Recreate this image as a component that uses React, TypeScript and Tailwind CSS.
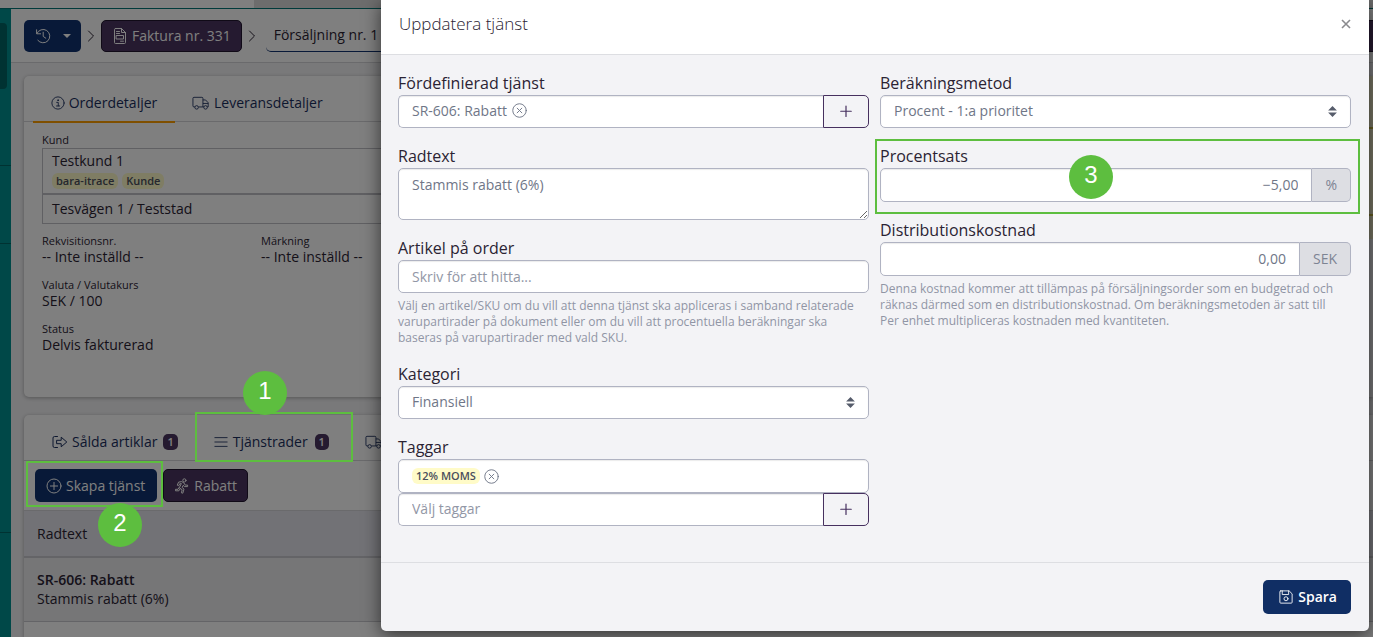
import React, { useState } from "react";
import type { ReactNode } from "react";

// Thin line icons, all on a 16x16 grid
const icons: Record<string, ReactNode> = {
  history: (
    <>
      <path d="M1.6 1.8v4h4" />
      <path d="M1.9 5.5A6.7 6.7 0 1 1 2.8 12.3" />
      <path d="M8.2 4.2v4.2l2.6 1.8" />
    </>
  ),
  invoice: (
    <>
      <path d="M3.5.5h6l4 4v10q0 1-1 1h-9q-1 0-1-1v-13q0-1 1-1z" />
      <path d="M9.5.5v4h4M4.5 3.5h3M4.5 5.5h3M4.5 7.5h7v3.5h-7zM8.5 13.2h3" />
    </>
  ),
  info: (
    <>
      <circle cx="8" cy="8" r="7" />
      <path d="M6.5 7.3H8.3v4M6.3 11.4h3.6" />
      <circle cx="8" cy="4.8" r=".5" fill="currentColor" />
    </>
  ),
  signOut: (
    <>
      <path d="M5.5 2.5h-3q-1.5 0-1.5 1.5v8q0 1.5 1.5 1.5h3" />
      <path d="M5 6.3h4.2V3.2L14.8 8l-5.6 4.8V9.7H5z" />
    </>
  ),
  bars: <path d="M1 3h14M1 8h14M1 13h14" />,
  plusCircle: (
    <>
      <circle cx="8" cy="8" r="7" />
      <path d="M8 4.4v7.2M4.4 8h7.2" />
    </>
  ),
  timesCircle: (
    <>
      <circle cx="8" cy="8" r="7.2" />
      <path d="M5.5 5.5l5 5M10.5 5.5l-5 5" />
    </>
  ),
  running: (
    <>
      <circle cx="10.4" cy="2.4" r="1.6" />
      <path d="M3.4 6.8l1.2-2.7 3.1-.5 2.4 1.5 1.1 2h2.4v1.5h-3.3l-.9-1.4-1.4 2.2 2 1.7-1.2 4.1-1.4-.4.8-3-2.9-2 2.1-4.2-1.7.2-.8 1.6z" />
      <path d="M4.9 9.7L4 11.3H1.5v1.5h3.4l1.2-2" />
    </>
  ),
  save: (
    <>
      <path d="M2 1h9.6L15 4.4V14q0 1-1 1H2q-1 0-1-1V2q0-1 1-1z" />
      <path d="M3.7 1v4.2h7.3V1" />
      <circle cx="8" cy="10" r="2.3" />
    </>
  ),
  plus: <path d="M8 3v10.5M2.75 8.25h10.5" strokeWidth="1.2" />,
  chevron: <path d="M5.5 3l5 5-5 5" />,
};

const Icon = ({ name, className = "size-4" }: { name: string; className?: string }) => (
  <svg
    viewBox="0 0 16 16"
    fill="none"
    stroke="currentColor"
    strokeLinejoin="round"
    strokeLinecap="round"
    className={`shrink-0 ${className}`}
    aria-hidden="true"
  >
    {icons[name]}
  </svg>
);

const Truck = () => (
  <svg
    viewBox="0 0 20 16"
    fill="none"
    stroke="currentColor"
    strokeLinejoin="round"
    className="h-[14px] w-[18px] shrink-0"
    aria-hidden="true"
  >
    <path d="M3 12.5H2q-1.2 0-1.2-1.2V2.7q0-1.2 1.2-1.2h9q1.2 0 1.2 1.2v9.8H7.2" />
    <path d="M12.2 4.5h3l3 3.2v4.8h-1M18.2 8.5h-6M13.2 12.5h-1" />
    <circle cx="5" cy="13" r="2" />
    <circle cx="15.2" cy="13" r="2" />
  </svg>
);

const Tag = ({ children }: { children: ReactNode }) => (
  <span className="rounded-md bg-[#fffbc8] px-1 text-[11px] leading-4 font-semibold text-[#4b4f5c]">
    {children}
  </span>
);

const Count = ({ children }: { children: ReactNode }) => (
  <span className="ml-0.5 rounded-[5px] bg-[#4a3560] px-1 text-[11px] leading-4 font-semibold text-white">
    {children}
  </span>
);

const Info = ({ label, value }: { label: string; value: string }) => (
  <div className="h-11">
    <dt className="text-[11px] leading-4">{label}</dt>
    <dd className="text-sm leading-4">{value}</dd>
  </div>
);

// Form parts used in the dialog
const labelClass = "block text-base leading-6 text-[#2b2333]";
const boxClass =
  "w-full min-w-0 border border-[#b0b3c2] bg-white px-[13px] text-sm text-[#6f7687] shadow-[inset_0_1px_1px_rgba(0,0,0,0.08)] placeholder-[#9297a6] focus:outline-none";

const Select = ({ id, label, options }: { id: string; label: string; options: string[] }) => (
  <div>
    <label htmlFor={id} className={labelClass}>
      {label}
    </label>
    <div className="relative">
      <select id={id} className={`${boxClass} h-[33px] appearance-none rounded-[5px] pb-0.5`}>
        {options.map((o) => (
          <option key={o}>{o}</option>
        ))}
      </select>
      <svg
        viewBox="0 0 8 10"
        className="pointer-events-none absolute top-[11px] right-[14px] h-[11px] w-[9px] fill-[#565c6b]"
        aria-hidden="true"
      >
        <path d="M4 0L0 4h8zM4 10L0 6h8z" />
      </svg>
    </div>
  </div>
);

const AddButton = ({ label }: { label: string }) => (
  <button
    type="button"
    aria-label={label}
    className="flex w-[46px] shrink-0 items-center justify-center rounded-r-[5px] border border-[#46305f] pb-0.5 text-[#46305f]"
  >
    <Icon name="plus" />
  </button>
);

const Amount = ({
  id,
  label,
  unit,
  initial,
}: {
  id: string;
  label: string;
  unit: string;
  initial: string;
}) => {
  const [value, setValue] = useState(initial);
  return (
    <div>
      <label htmlFor={id} className={labelClass}>
        {label}
      </label>
      <div className="flex h-[34px]">
        <input
          id={id}
          type="text"
          value={value}
          onChange={(e) => setValue(e.target.value)}
          className={`${boxClass} rounded-l-[5px] text-right`}
        />
        <span className="flex items-center rounded-r-[5px] border border-l-0 border-[#b0b3c2] bg-[#dddee3] px-[13px] text-sm text-[#7d8493]">
          {unit}
        </span>
      </div>
    </div>
  );
};

const Help = ({ children }: { children: ReactNode }) => (
  <p className="mt-[5px] pr-2 text-xs leading-4 text-[#9095a5]">{children}</p>
);

// Order page behind the dialog
const OrderPage = () => (
  <div className="flex min-h-screen flex-col text-[#2b2333]">
    <div className="flex h-[9px] border-b border-[#007474] bg-[#dadada]">
      <div className="w-[254px] bg-white" />
    </div>
    <div className="flex flex-1">
      <nav className="flex w-[11px] shrink-0 flex-col bg-[#009090]">
        <div className="h-[157px] border-b border-[#006464] pt-[14px]">
          <div className="h-[66px] w-[7px] rounded-r bg-[#006464]" />
        </div>
        <div className="h-[78px] border-b border-[#006464]" />
        <div className="h-[289px] border-b border-[#006464]" />
      </nav>
      <main className="min-w-0 flex-1 bg-[#f3f3f5]">
        <div className="flex h-[54px] items-center border-b border-[#d4d4d8] bg-white pl-[13px]">
          <button
            type="button"
            aria-label="Historik"
            className="flex h-8 w-[57px] items-center gap-3 rounded-[5px] bg-[#113370] pl-[11px] text-white"
          >
            <Icon name="history" />
            <svg viewBox="0 0 8 4" className="h-1 w-2 fill-current" aria-hidden="true">
              <path d="M0 0h8L4 4z" />
            </svg>
          </button>
          <Icon name="chevron" className="mx-0.5 size-4" />
          <button
            type="button"
            className="flex h-8 items-center gap-1 rounded-[5px] border border-[#20152e] bg-[#4a3560] px-[10px] text-sm text-white"
          >
            <Icon name="invoice" />
            Faktura nr. 331
          </button>
          <Icon name="chevron" className="mx-0.5 size-4" />
          <button
            type="button"
            className="ml-1 h-8 shrink-0 rounded-[5px] border-b border-[#113370] px-2 text-sm"
          >
            Försäljning nr. 1
          </button>
          <button
            type="button"
            aria-label="Fler val"
            className="ml-auto h-8 w-5 rounded-l-[5px] border border-r-0 border-[#20152e] bg-[#4a3560]"
          />
        </div>

        <div className="pt-[13px] pl-[13px]">
          <section className="flex rounded-l-[5px] bg-white shadow-[0_1px_4px_rgba(0,0,0,0.3)]">
            <div className="h-[321px] flex-1">
              <div className="flex h-[46px] border-b border-[#d4d4d8] pl-[9px] text-sm text-[#1b2f5e]">
                <a href="#order" className="flex h-[47px] w-[142px] items-center justify-center gap-1 border-b-2 border-[#ff9f00] pt-2">
                  <Icon name="info" className="size-[14px]" /> Orderdetaljer
                </a>
                <a href="#leverans" className="flex h-[47px] items-center gap-1 px-[17px] pt-[6px]">
                  <Truck /> Leveransdetaljer
                </a>
              </div>
              <div className="pt-[10px] pl-[18px]">
                <h2 className="text-[11px] leading-4">Kund</h2>
                <div className="border border-r-0 border-[#c0c0c6] text-sm">
                  <div className="h-[46px] border-b-2 border-[#c0c0c6] pt-0.5 pl-[9px]">
                    <p className="leading-5">Testkund 1</p>
                    <div className="mt-0.5 flex gap-1">
                      <Tag>bara-itrace</Tag>
                      <Tag>Kunde</Tag>
                    </div>
                  </div>
                  <p className="pl-[9px] leading-7">Tesvägen 1 / Teststad</p>
                </div>
                <dl className="grid grid-cols-[219px_1fr] pt-[9px]">
                  <Info label="Rekvisitionsnr." value="-- Inte inställd --" />
                  <Info label="Märkning" value="-- Inte inställd --" />
                  <div className="col-span-2">
                    <Info label="Valuta / Valutakurs" value="SEK / 100" />
                    <Info label="Status" value="Delvis fakturerad" />
                  </div>
                </dl>
              </div>
            </div>
            <aside className="w-[300px] bg-[#f3f3f5]">
              <div className="h-[53px] border-b-2 border-[#c8b840] bg-[#f0ecc8]" />
              <div className="h-[87px] border-b-2 border-[#c8b840] bg-[#f0ecc8]" />
              <div className="h-[23px] bg-[#f0ecc8]" />
            </aside>
          </section>

          <section className="mt-[18px] rounded-tl-[5px] bg-white shadow-[0_1px_4px_rgba(0,0,0,0.3)]">
            <div className="flex h-[46px] items-center gap-9 border-b border-[#d4d4d8] pt-2 pl-7 text-sm text-[#1b2f5e]">
              <a href="#artiklar" className="flex items-center gap-1">
                <Icon name="signOut" /> Sålda artiklar <Count>1</Count>
              </a>
              <a href="#tjanster" className="flex items-center gap-[5px]">
                <Icon name="bars" className="size-[14px]" /> Tjänstrader <Count>1</Count>
              </a>
              <a href="#leveranser" aria-label="Leveranser">
                <Truck />
              </a>
            </div>
            <div className="flex h-[50px] items-center gap-[6px] border-b border-[#d4d4d8] pl-[11px] text-sm text-white">
              <button type="button" className="flex h-[33px] items-center gap-1 rounded-[5px] bg-[#113370] pr-3 pl-[11px]">
                <Icon name="plusCircle" /> Skapa tjänst
              </button>
              <button type="button" className="flex h-[33px] items-center gap-1 rounded-[5px] border border-[#20152e] bg-[#4a3560] px-[10px]">
                <Icon name="running" /> Rabatt
              </button>
            </div>
            <table className="w-full text-left text-sm">
              <thead>
                <tr className="h-[46px] border-b-2 border-[#c8c8ce] bg-[#e4e5ec]">
                  <th className="pl-[13px] font-normal">Radtext</th>
                </tr>
              </thead>
              <tbody>
                <tr className="h-[64px] border-b border-[#c8c8ce] bg-[#ececef]">
                  <td className="pl-[13px] leading-[19px]">
                    <strong className="block font-semibold">SR-606: Rabatt</strong>
                    Stammis rabatt (6%)
                  </td>
                </tr>
              </tbody>
            </table>
            <div className="h-4" />
          </section>
        </div>
      </main>
    </div>
  </div>
);

// Numbered green marker of the guide
const Step = ({ className, children }: { className: string; children: ReactNode }) => (
  <span
    className={`pointer-events-none absolute flex size-11 items-center justify-center rounded-full bg-[#5dbe3f] pb-1 font-['Liberation_Sans',sans-serif] text-2xl text-white ${className}`}
  >
    {children}
  </span>
);

const ServiceDialog = () => {
  const [text, setText] = useState("Stammis rabatt (6%)");

  return (
    <form
      role="dialog"
      aria-labelledby="dialog-title"
      onSubmit={(e) => e.preventDefault()}
      className="absolute top-0 right-1 left-[381px] rounded-b-[5px] bg-[#f3f3f6] shadow-[0_4px_18px_rgba(0,0,0,0.6)]"
    >
      <header className="flex h-[55px] items-center justify-between border-b border-[#dddee2] bg-white px-[18px] pb-[6px]">
        <h1 id="dialog-title" className="text-[17px] font-light text-[#2b2333]">
          Uppdatera tjänst
        </h1>
        <button type="button" aria-label="Stäng" className="text-[#8a8a8e]">
          <svg viewBox="0 0 10 10" className="size-[10px]" stroke="currentColor" strokeWidth="1.6" aria-hidden="true">
            <path d="M1 1l8 8M9 1l-8 8" />
          </svg>
        </button>
      </header>

      <div className="grid grid-cols-2 gap-[11px] pt-4 pr-[18px] pb-9 pl-[17px]">
        <div className="flex flex-col gap-4">
          <div>
            <h2 className={labelClass}>Fördefinierad tjänst</h2>
            <div className="flex h-[33px]">
              <div className={`${boxClass} flex items-center gap-[5px] rounded-l-[5px] border-r-0 pb-0.5`}>
                SR-606: Rabatt
                <button type="button" aria-label="Ta bort tjänst">
                  <Icon name="timesCircle" className="size-[15px]" />
                </button>
              </div>
              <AddButton label="Lägg till tjänst" />
            </div>
          </div>
          <div>
            <label htmlFor="radtext" className={labelClass}>
              Radtext
            </label>
            <textarea
              id="radtext"
              value={text}
              onChange={(e) => setText(e.target.value)}
              className={`${boxClass} block h-[52px] rounded-[5px] pt-[6px]`}
            />
          </div>
          <div>
            <label htmlFor="artikel" className={labelClass}>
              Artikel på order
            </label>
            <input
              id="artikel"
              type="text"
              placeholder="Skriv för att hitta..."
              className={`${boxClass} block h-[33px] rounded-[5px]`}
            />
            <Help>
              Välj en artikel/SKU om du vill att denna tjänst ska appliceras i samband relaterade
              varupartirader på dokument eller om du vill att procentuella beräkningar ska baseras
              på varupartirader med vald SKU.
            </Help>
          </div>
          <Select id="kategori" label="Kategori" options={["Finansiell"]} />
          <div>
            <label htmlFor="taggar" className={labelClass}>
              Taggar
            </label>
            <div className={`${boxClass} flex h-[34px] items-center gap-1 rounded-[5px]`}>
              <Tag>12% MOMS</Tag>
              <button type="button" aria-label="Ta bort tagg">
                <Icon name="timesCircle" className="size-[15px]" />
              </button>
            </div>
            <div className="flex h-[33px]">
              <input
                id="taggar"
                type="text"
                placeholder="Välj taggar"
                className={`${boxClass} rounded-l-[5px] border-r-0 pb-0.5`}
              />
              <AddButton label="Lägg till tagg" />
            </div>
          </div>
        </div>

        <div className="flex flex-col gap-4">
          <Select id="metod" label="Beräkningsmetod" options={["Procent - 1:a prioritet"]} />
          <div className="relative">
            <Amount id="procent" label="Procentsats" unit="%" initial="−5,00" />
            <div className="pointer-events-none absolute -top-[5px] -right-[9px] -left-[5px] h-[75px] border-2 border-[#5dbe3f]" />
            <Step className="top-[11px] left-[189px]">3</Step>
          </div>
          <div>
            <Amount id="distribution" label="Distributionskostnad" unit="SEK" initial="0,00" />
            <Help>
              Denna kostnad kommer att tillämpas på försäljningsorder som en budgetrad och räknas
              därmed som en distributionskostnad. Om beräkningsmetoden är satt till Per enhet
              multipliceras kostnaden med kvantiteten.
            </Help>
          </div>
        </div>
      </div>

      <footer className="flex justify-end border-t border-[#dddee2] py-[17px] pr-[18px]">
        <button
          type="submit"
          className="flex h-[34px] items-center gap-[5px] rounded-[5px] bg-[#102e64] pr-[14px] pl-4 text-sm font-semibold text-white"
        >
          <Icon name="save" className="size-[14px]" /> Spara
        </button>
      </footer>
    </form>
  );
};

const App = () => {
  return (
    <div className="relative overflow-hidden font-['Open_Sans','Noto_Sans',sans-serif]">
      <OrderPage />
      <div className="absolute inset-0 bg-black/50" />
      <ServiceDialog />

      <div className="pointer-events-none absolute top-[412px] left-[195px] h-[50px] w-[158px] border-2 border-[#5dbe3f]" />
      <Step className="top-[371px] left-[243px]">1</Step>
      <div className="pointer-events-none absolute top-[461px] left-[26px] h-[46px] w-[137px] border-2 border-[#5dbe3f]" />
      <Step className="top-[503px] left-[98px]">2</Step>
    </div>
  );
};

export default App;
